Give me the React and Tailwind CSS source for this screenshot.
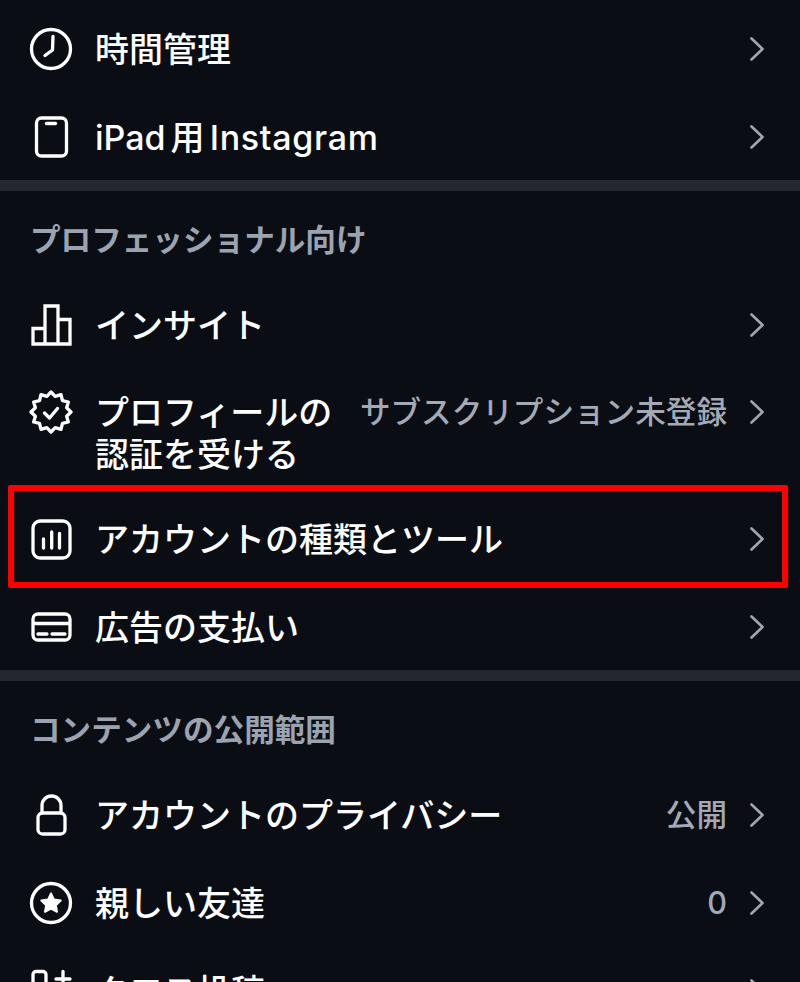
import React from 'react';

const Chevron = () => (
    <svg viewBox="0 0 14 24" className="w-[14px] h-6 shrink-0" fill="none" stroke="#a0a6b1" strokeWidth="2.6" strokeLinecap="round" strokeLinejoin="round">
        <path d="M1.5 1.5 12.5 12 1.5 22.5" />
    </svg>
);

const Icon = ({ children }) => (
    <svg viewBox="0 0 44 44" className="w-11 h-11 shrink-0" fill="none" stroke="white" strokeWidth="3.3" strokeLinecap="round" strokeLinejoin="round">
        {children}
    </svg>
);

const badgePoints = () => {
    const pts = [];
    for (let i = 0; i < 24; i++) {
        const r = i % 2 === 0 ? 20 : 16.2;
        const a = (i * Math.PI) / 12 - Math.PI / 2;
        pts.push(`${(22 + r * Math.cos(a)).toFixed(2)},${(22 + r * Math.sin(a)).toFixed(2)}`);
    }
    return pts.join(' ');
};

const icons = {
    clock: (
        <>
            <circle cx="22" cy="22" r="19.5" />
            <path d="M24 9.5 23.5 23 16 28.5" />
        </>
    ),
    ipad: (
        <>
            <rect x="7.5" y="3" width="30" height="38" rx="5" />
            <path d="M17.5 8.5h9" />
        </>
    ),
    insights: <path d="M4 41V25.5h12V3h13v13.5h12V41ZM16 25.5V41M29 16.5V41" strokeLinejoin="miter" strokeLinecap="square" />,
    badge: (
        <>
            <polygon points={badgePoints()} />
            <path d="M15.5 23 20.5 28 28.5 18.5" />
        </>
    ),
    account: (
        <>
            <rect x="4" y="4" width="37" height="37" rx="7" />
            <path d="M14.5 22v9M22.7 15v16M30.5 16.5V31" />
        </>
    ),
    card: (
        <>
            <rect x="4" y="9" width="37" height="26" rx="5" />
            <path d="M3 18.5h39" strokeWidth="3.6" strokeLinecap="butt" />
            <path d="M9 29h9M23 29h13" />
        </>
    ),
    lock: (
        <>
            <rect x="9" y="20" width="27" height="21" rx="4.5" />
            <path d="M13 20v-7.5a9.5 9.5 0 0 1 19 0V20" />
        </>
    ),
    star: (
        <>
            <circle cx="22" cy="22" r="19.5" />
            <path d="M22 12.5 25 18.6l6.7.9-4.9 4.7 1.2 6.6L22 27.7l-6 3.1 1.2-6.6-4.9-4.7 6.7-.9Z" fill="white" strokeWidth="2" />
        </>
    ),
    cross: (
        <>
            <rect x="4" y="2.5" width="13" height="24" rx="3" />
            <path d="M34 2.5v15M27 10h14" />
        </>
    ),
};

const Row = ({ icon, label, value }) => (
    <div className="flex items-center h-[88px] pl-[29px] pr-9">
        <Icon>{icons[icon]}</Icon>
        <span className="ml-[22px] flex-1 text-[34px] font-medium text-white whitespace-nowrap">{label}</span>
        {value && <span className="mr-[23px] text-[30.6px] font-medium text-[#a3a9b5]">{value}</span>}
        <Chevron />
    </div>
);

const Section = ({ children }) => (
    <div className="flex items-center h-[90px] pt-2 pl-[30px] text-[30.6px] font-bold text-[#9ca3b0]">{children}</div>
);

const Divider = () => <div className="h-[11px] -mt-px bg-[#23272e]" />;

const App = () => {
    return (
        <div
            className="h-[982px] w-[800px] overflow-hidden bg-[#0a0e14] pt-[5px]"
            style={{ fontFamily: 'Inter, "Noto Sans CJK JP", sans-serif' }}
        >
            <Row icon="clock" label="時間管理" />
            <Row
                icon="ipad"
                label={
                    <span className="[word-spacing:-4px]">
                        iPad 用 <span className="tracking-[0.7px]">Instagram</span>
                    </span>
                }
            />
            <Divider />
            <Section>プロフェッショナル向け</Section>
            <Row icon="insights" label="インサイト" />

            <div className="flex items-start h-[126px] pl-[29px] pr-9 pt-[21px]">
                <Icon>{icons.badge}</Icon>
                <span className="ml-[22px] mt-[2px] flex-1 text-[34px] leading-[42px] font-medium text-white">
                    プロフィールの
                    <br />
                    認証を受ける
                </span>
                <span className="mr-[23px] text-[30.6px] leading-[44px] font-medium text-[#a3a9b5] whitespace-nowrap">サブスクリプション未登録</span>
                <div className="h-11 flex items-center">
                    <Chevron />
                </div>
            </div>

            <div className="relative">
                <Row icon="account" label="アカウントの種類とツール" />
                <div className="absolute left-2 right-3 -top-[10px] -bottom-[5px] border-[6px] border-[#ff0000] rounded-[2px]" />
            </div>
            <Row icon="card" label="広告の支払い" />
            <Divider />
            <Section>コンテンツの公開範囲</Section>
            <Row icon="lock" label="アカウントのプライバシー" value="公開" />
            <Row icon="star" label="親しい友達" value="0" />
            <Row icon="cross" label="クロス投稿" />
        </div>
    );
};

export default App;
